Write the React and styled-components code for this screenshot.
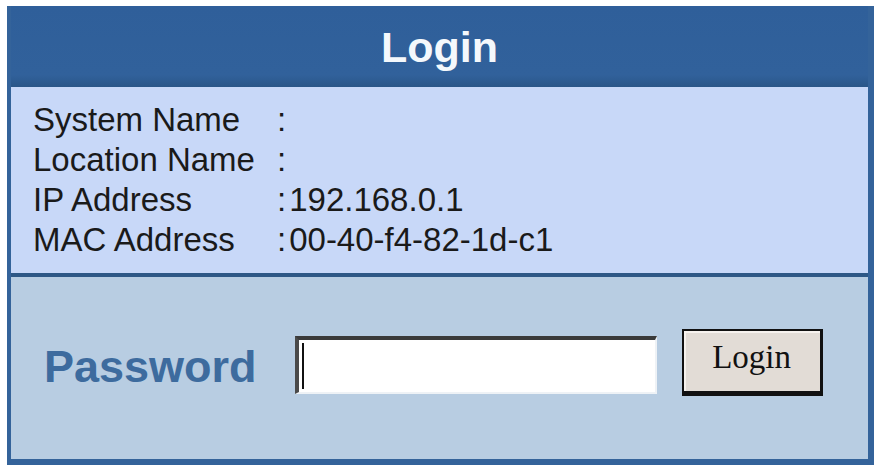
import React from 'react';
import styled, { createGlobalStyle } from 'styled-components';

const GlobalStyle = createGlobalStyle`
	html, body {
		margin: 0;
		padding: 0;
		background: #ffffff;
	}
`;

const Page = styled.div`
	padding: 6px 0 0 7px;
`;

const Frame = styled.div`
	width: 867px;
	height: 459px;
	box-sizing: border-box;
	background-color: #34639a;
	padding: 0 6px 6px 4px;
	display: flex;
	flex-direction: column;
`;

const Header = styled.div`
	height: 81px;
	flex: none;
	display: flex;
	align-items: center;
	justify-content: center;
	background: linear-gradient(#2f5f9a 0%, #31619b 85%, #2a5688 100%);
	color: #f4f8fc;
	font-family: "Liberation Sans", Arial, sans-serif;
	font-weight: bold;
	font-size: 43px;
	padding-top: 1px;
	box-sizing: border-box;
`;

const InfoPanel = styled.div`
	height: 186px;
	flex: none;
	box-sizing: border-box;
	background-color: #c8d8f8;
	padding: 13px 0 0 22px;
	display: grid;
	grid-template-columns: 244px auto;
	grid-auto-rows: 40px;
	align-content: start;
	font-family: "Liberation Sans", Arial, sans-serif;
	font-size: 33px;
	line-height: 40px;
	color: #1a1a1a;
`;

const Label = styled.div`
	white-space: nowrap;
`;

const Value = styled.div`
	white-space: nowrap;
	&::before {
		content: ':';
		margin-right: 3px;
	}
`;

const Divider = styled.div`
	height: 4px;
	flex: none;
	background-color: #2e5886;
`;

const LoginPanel = styled.form`
	flex: 1;
	margin: 0;
	background-color: #b8cde2;
	display: flex;
	align-items: center;
	padding: 0 0 8px 33px;
	box-sizing: border-box;
`;

const PasswordLabel = styled.label`
	font-family: "Liberation Sans", Arial, sans-serif;
	font-weight: bold;
	font-size: 45px;
	color: #3d6b9e;
	margin-right: 38px;
	padding-top: 6px;
`;

const Field = styled.div`
	position: relative;
	width: 362px;
	height: 58px;
	box-sizing: border-box;
	border-style: solid;
	border-width: 4px 2px 2px 4px;
	border-color: #3a3a3a #eef2f6 #eef2f6 #4a4a4a;
	background-color: #ffffff;
	margin-right: 25px;
	margin-top: 2px;
`;

const PasswordInput = styled.input`
	width: 100%;
	height: 100%;
	box-sizing: border-box;
	border: none;
	outline: none;
	background: transparent;
	padding: 0 6px;
	font-size: 30px;
	caret-color: transparent;
`;

const Caret = styled.span`
	position: absolute;
	left: 3px;
	top: 3px;
	bottom: 3px;
	width: 2px;
	background-color: #111111;
	pointer-events: none;
`;

const Button = styled.button`
	width: 141px;
	height: 67px;
	box-sizing: border-box;
	background-color: #e2dcd6;
	border: 2px solid #111111;
	border-bottom-width: 5px;
	border-right-width: 3px;
	box-shadow: inset 2px 2px 0 #f6f2ee;
	font-family: "Liberation Serif", "Times New Roman", serif;
	font-size: 33px;
	color: #111111;
	padding: 0 0 6px 0;
	margin-top: -4px;
	cursor: pointer;
`;

const rows = [
	{ label: 'System Name', value: '' },
	{ label: 'Location Name', value: '' },
	{ label: 'IP Address', value: '192.168.0.1' },
	{ label: 'MAC Address', value: '00-40-f4-82-1d-c1' },
];

const App = () => (
	<Page>
		<GlobalStyle />
		<Frame>
			<Header>Login</Header>
			<InfoPanel>
				{rows.map(row => (
					<React.Fragment key={row.label}>
						<Label>{row.label}</Label>
						<Value>{row.value}</Value>
					</React.Fragment>
				))}
			</InfoPanel>
			<Divider />
			<LoginPanel onSubmit={e => e.preventDefault()}>
				<PasswordLabel htmlFor="pw">Password</PasswordLabel>
				<Field>
					<PasswordInput id="pw" type="password" />
					<Caret />
				</Field>
				<Button type="submit">Login</Button>
			</LoginPanel>
		</Frame>
	</Page>
);

export default App;
